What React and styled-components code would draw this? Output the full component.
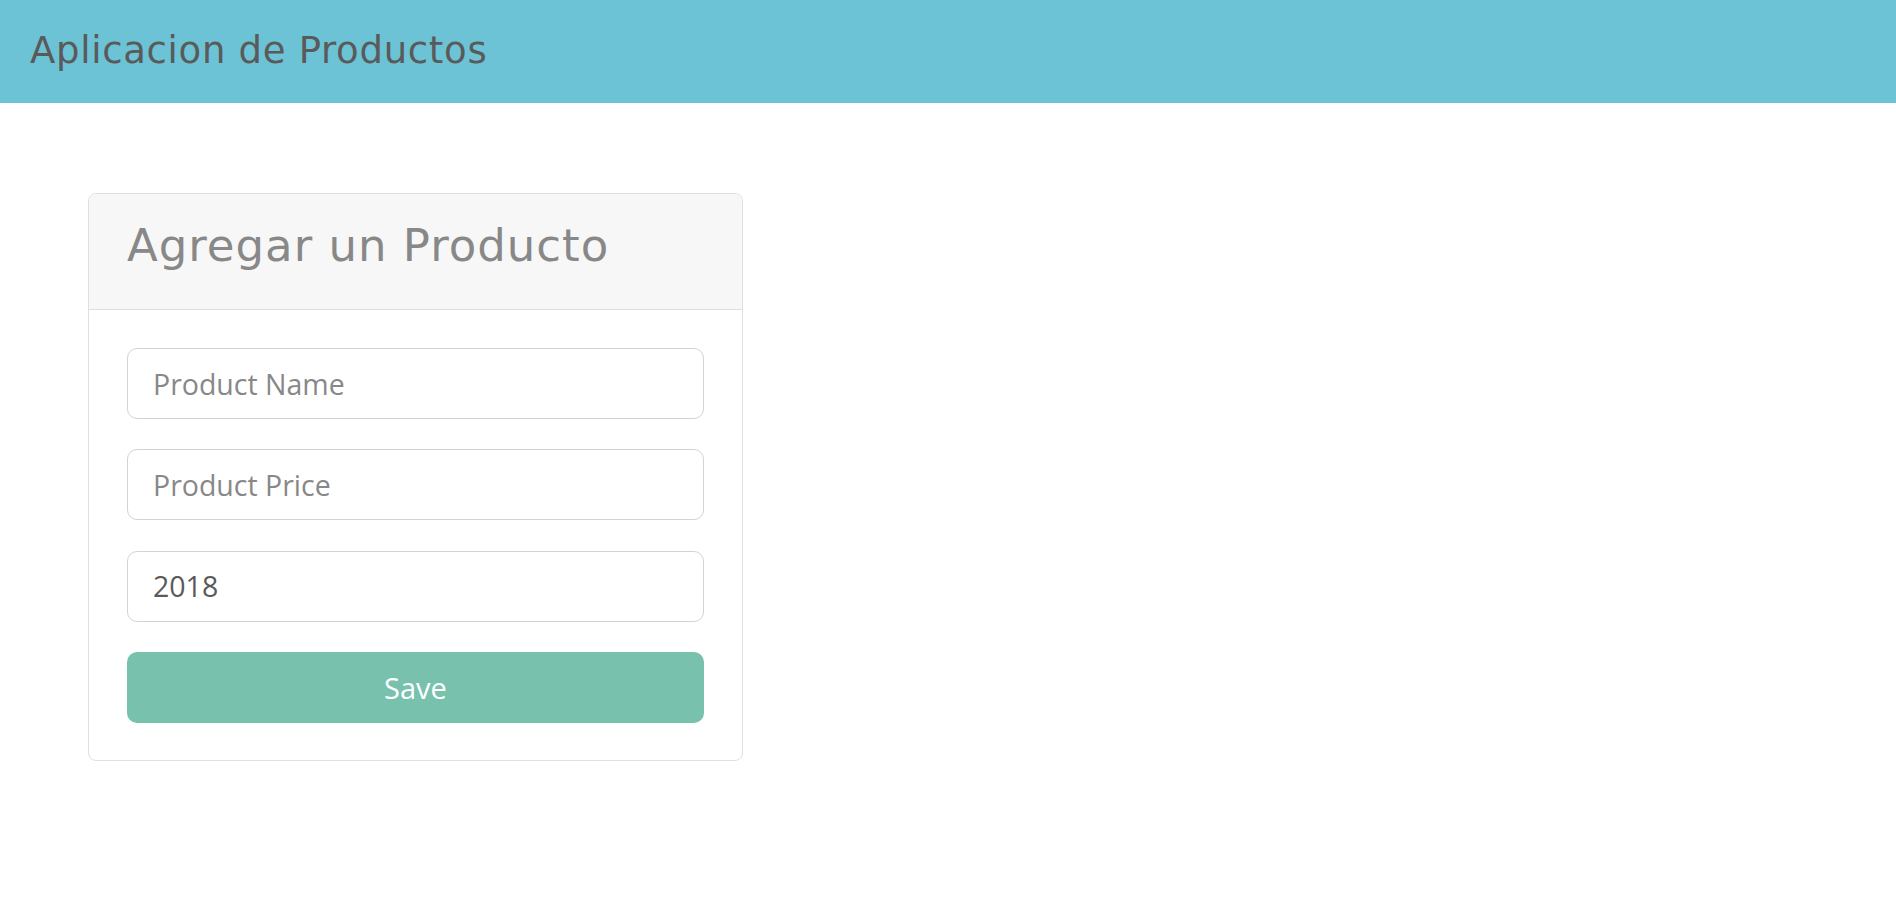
import React from "react";
import styled, { createGlobalStyle } from "styled-components";

const Global = createGlobalStyle`
  html, body { margin: 0; padding: 0; background: #ffffff; }
  body { font-family: "Open Sans", "Noto Sans", sans-serif; color: #5a5a5a; }
  * { box-sizing: border-box; }
`;

const NavBar = styled.nav`
  height: 103px;
  background: #6cc3d5;
  display: flex;
  align-items: center;
  padding: 0 30px;
`;

const Brand = styled.span`
  font-family: "DejaVu Sans", sans-serif;
  font-size: 37px;
  font-weight: 400;
  letter-spacing: 0.7px;
  color: #5a5a5a;
  line-height: 1;
  padding-bottom: 2px;
`;

const Main = styled.main`
  padding: 90px 88px;
`;

const Card = styled.section`
  width: 655px;
  border: 1px solid #dfdfdf;
  border-radius: 8px;
  overflow: hidden;
  background: #ffffff;
`;

const CardHeader = styled.header`
  height: 116px;
  background: #f7f7f7;
  border-bottom: 1px solid #dfdfdf;
  display: flex;
  align-items: center;
  padding: 0 38px 12px;
`;

const Title = styled.h3`
  margin: 0;
  font-family: "DejaVu Sans", sans-serif;
  font-weight: 400;
  font-size: 45px;
  letter-spacing: 1px;
  line-height: 1;
  color: #888888;
`;

const Form = styled.form`
  padding: 38px 38px 37px;
  display: flex;
  flex-direction: column;
  gap: 30.3px;
`;

const Input = styled.input`
  height: 71px;
  width: 100%;
  border: 1px solid #ced4da;
  border-radius: 10px;
  padding: 0 25px;
  font-family: "Open Sans", sans-serif;
  font-size: 28.5px;
  color: #5a5a5a;
  background: #ffffff;
  outline: none;
  &::placeholder { color: #888888; }
`;

const SaveButton = styled.button`
  height: 71px;
  width: 100%;
  border: none;
  border-radius: 10px;
  background: #78c2ad;
  color: #ffffff;
  font-family: "Open Sans", sans-serif;
  font-size: 29px;
  cursor: pointer;
`;

export default function App() {
  return (
    <>
      <Global />
      <NavBar>
        <Brand>Aplicacion de Productos</Brand>
      </NavBar>
      <Main>
        <Card>
          <CardHeader>
            <Title>Agregar un Producto</Title>
          </CardHeader>
          <Form onSubmit={(e) => e.preventDefault()}>
            <Input type="text" placeholder="Product Name" />
            <Input type="text" placeholder="Product Price" />
            <Input type="text" defaultValue="2018" />
            <SaveButton type="submit">Save</SaveButton>
          </Form>
        </Card>
      </Main>
    </>
  );
}
